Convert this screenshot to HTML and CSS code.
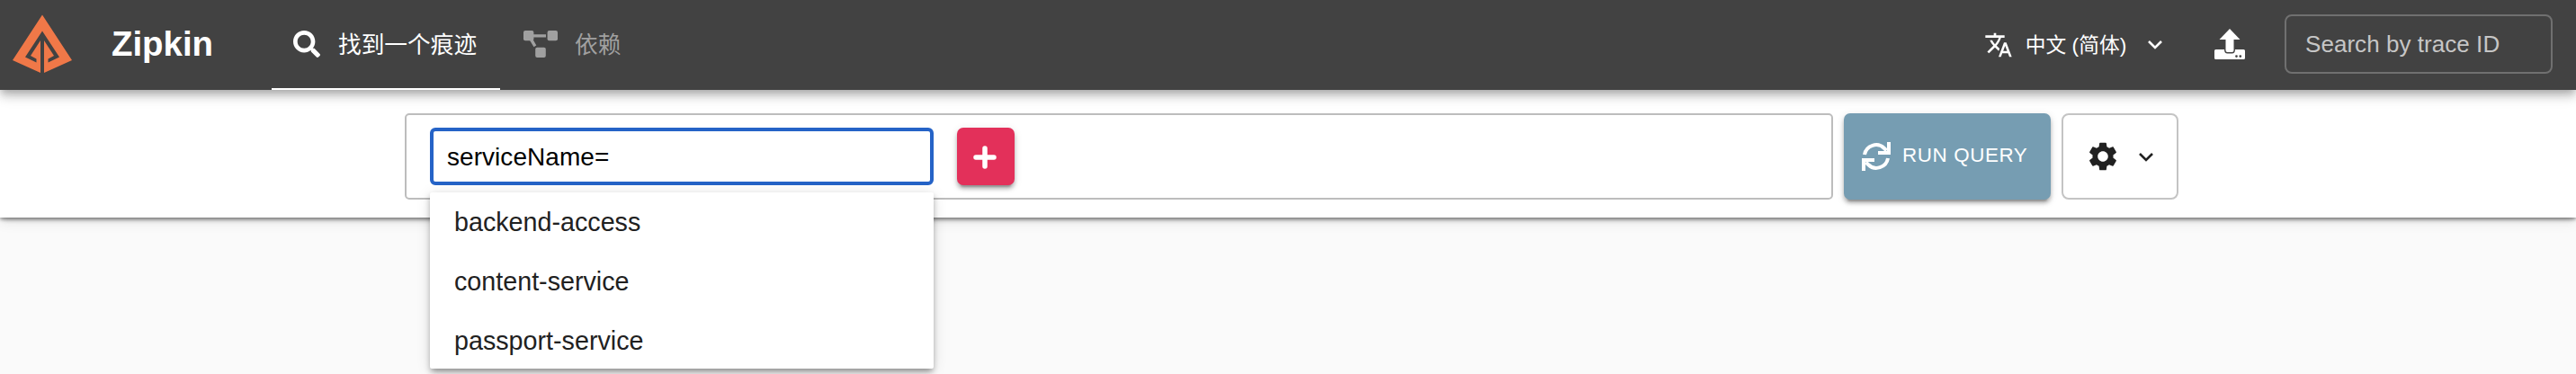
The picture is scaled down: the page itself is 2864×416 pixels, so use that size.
FILE: index.html
```html
<!DOCTYPE html>
<html lang="zh-CN">
<head>
<meta charset="utf-8">
<title>Zipkin</title>
<link rel="stylesheet" href="styles.css">
</head>
<body>
<header class="header">
  <svg class="logo" viewBox="0 0 66 66"><path d="M33 .5 66 51 35 65V29L46 46 39.500 49.500V53.500L52 47.500 33 18.500 14 47.500 26.500 53.500V49.500L20 46 31 29V65L0 51Z"/></svg>
  <h1 class="title">Zipkin</h1>
  <nav class="tabs">
    <a class="tab active"><svg class="search" viewBox="0 0 512 512"><path d="M505 442.700 405.300 343c-4.500-4.500-10.600-7-17-7H372c27.600-35.300 44-79.700 44-128C416 93.100 322.900 0 208 0S0 93.100 0 208s93.100 208 208 208c48.300 0 92.700-16.400 128-44v16.300c0 6.400 2.500 12.500 7 17l99.700 99.700c9.400 9.400 24.600 9.400 33.900 0l28.300-28.300c9.400-9.400 9.400-24.600.1-34zM208 336c-70.700 0-128-57.200-128-128 0-70.700 57.200-128 128-128 70.700 0 128 57.200 128 128 0 70.700-57.200 128-128 128z"/></svg><span>找到一个痕迹</span></a>
    <a class="tab"><svg class="deps" viewBox="0 0 38 30"><rect width="11.400" height="11.200" rx="2"/><rect x="26.600" width="11.400" height="11.200" rx="2"/><rect x="13.200" y="18.800" width="11.600" height="11.200" rx="2"/><path d="M11 4.200h14v3.200H11zM6.500 10l3-2 4.800 8.500-2.800 1.800Z"/></svg><span>依赖</span></a>
  </nav>
  <div class="tools">
    <button class="language"><svg class="translate" viewBox="0 0 24 24"><path d="M12.870 15.070l-2.540-2.510.03-.03c1.740-1.940 2.980-4.170 3.710-6.530H17V4h-7V2H8v2H1v1.990h11.170C11.500 7.920 10.440 9.750 9 11.350 8.070 10.320 7.300 9.190 6.690 8h-2c.73 1.630 1.730 3.170 2.980 4.560l-5.090 5.020L4 19l5-5 3.110 3.110.76-2.040zM18.500 10h-2L12 22h2l1.120-3h4.750L21 22h2l-4.500-12zm-2.620 7l1.620-4.330L19.120 17h-3.240z"/></svg><span>中文 (简体)</span><svg class="chevron" viewBox="0 0 16 10"><path d="m1 1 7 7 7-7"/></svg></button>
    <svg class="upload" viewBox="0 0 34 34"><path d="M17 0 28.500 12H21.500V24q0 2-2 2h-5q-2 0-2-2V12H5.500Z"/><path fill-rule="evenodd" d="M1.500 23H11q0 4.500 3.500 4.500h5Q23 27.500 23 23h9.500Q34 23 34 24.500v8Q34 34 32.500 34h-31Q0 34 0 32.500v-8Q0 23 1.500 23ZM24.500 29.200a1.400 1.400 0 1 0 0 2.800 1.400 1.400 0 0 0 0-2.800Zm4.300 0a1.400 1.400 0 1 0 0 2.800 1.400 1.400 0 0 0 0-2.800Z"/></svg>
    <input class="trace-input" placeholder="Search by trace ID">
  </div>
</header>
<main class="search-bar">
  <div class="criteria">
    <div class="criterion">
      <input class="criterion-input" value="serviceName=">
      <ul class="suggestions"><li>backend-access</li><li>content-service</li><li>passport-service</li></ul>
    </div>
    <button class="add"><svg viewBox="0 0 26 26"><path d="M13 3v20M3 13h20"/></svg></button>
  </div>
  <button class="run"><svg viewBox="0 0 32 32"><path d="M3 14A13 13 0 0 1 25 7L27.500 9.500M29 18A13 13 0 0 1 7 25L4.500 22.500"/><path class="fill" d="M28 0h4v14H18v-4h10ZM4 32H0V18h14v4H4Z"/></svg><span>RUN QUERY</span></button>
  <button class="settings"><svg class="gear" viewBox="2 2 20 20"><path d="M19.140 12.940c.04-.3.060-.61.060-.94 0-.32-.02-.64-.07-.94l2.030-1.580c.18-.14.230-.41.120-.61l-1.920-3.320c-.12-.22-.37-.29-.59-.22l-2.390.96c-.5-.38-1.030-.7-1.620-.94l-.36-2.540c-.04-.24-.24-.41-.48-.41h-3.840c-.24 0-.43.170-.47.410l-.36 2.540c-.59.240-1.130.570-1.620.940l-2.390-.96c-.22-.08-.47 0-.59.220L2.740 8.870c-.12.210-.08.470.120.610l2.030 1.580c-.05.300-.09.630-.09.940s.02.640.07.940l-2.030 1.580c-.18.140-.23.410-.12.610l1.920 3.320c.12.220.37.290.59.220l2.390-.96c.5.380 1.030.7 1.620.940l.36 2.540c.05.240.24.410.48.410h3.840c.24 0 .44-.17.470-.41l.36-2.540c.59-.24 1.130-.56 1.620-.94l2.390.96c.22.080.47 0 .59-.22l1.920-3.320c.12-.22.070-.47-.12-.61l-2.010-1.580zM12 15.600c-1.980 0-3.600-1.620-3.600-3.600s1.620-3.600 3.600-3.600 3.600 1.620 3.600 3.600-1.620 3.600-3.600 3.600z"/></svg><svg class="chevron" viewBox="0 0 16 10"><path d="m1 1 7 7 7-7"/></svg></button>
</main>
</body>
</html>
```

FILE: styles.css
```css
* { box-sizing: border-box; }
body { margin: 0; height: 416px; overflow: hidden; background: #fafafa; font-family: "Liberation Sans", "Noto Sans CJK SC", sans-serif; }
button { border: 0; padding: 0; background: none; font-family: inherit; display: flex; align-items: center; }
svg { display: block; flex: none; fill: currentColor; }
input { outline: 0; font-family: inherit; }
.header { position: relative; z-index: 1; height: 100px; display: flex; align-items: center; background: #424242; color: #fff; box-shadow: 0 4px 8px -2px rgba(0,0,0,.2), 0 8px 10px rgba(0,0,0,.14), 0 2px 20px rgba(0,0,0,.12); }
.logo { width: 66px; height: 66px; margin: -2px 0 0 14px; color: #f07848; }
.title { width: 178px; margin: -2px 0 0 44px; font-size: 38.400px; line-height: 46px; }
.tabs { display: flex; height: 100px; }
.tab { display: flex; align-items: center; height: 100px; padding: 0 24px; font-size: 25.700px; line-height: 38px; font-weight: 400; color: #a0a0a0; white-space: nowrap; }
.active { width: 254px; border-bottom: 2px solid #fff; color: #fff; }
.tab:not(.active) { padding: 0 26px 2px; }
.search { width: 30px; height: 30px; margin-right: 20px; }
.deps { width: 38px; height: 30px; margin-right: 19px; }
.tab span { padding-top: 2px; }
.tools { display: flex; align-items: center; margin: -2px 26px 0 auto; }
.language { color: #fff; font-size: 22.750px; font-weight: 400; margin-right: 58px; }
.translate { width: 32px; height: 32px; margin: 2px 12px 0 0; }
.language span { width: 116px; margin-right: 22px; padding-bottom: 2px; white-space: nowrap; }
.chevron { width: 16px; height: 10px; margin-top: 2px; fill: none; stroke: currentColor; stroke-width: 2.600; }
.upload { width: 34px; height: 34px; margin-right: 44px; }
.trace-input { width: 298px; height: 66px; padding: 0 21px; border: 2px solid #707070; border-radius: 8px; background: transparent; color: #fff; font-size: 26px; letter-spacing: .05px; }
.trace-input::placeholder { color: #c6c6c6; opacity: 1; }
.search-bar { display: flex; height: 142px; padding: 26px 442px 20px 450px; gap: 12px; background: #fff; box-shadow: 0 6px 6px -4px rgba(0,0,0,.2), 0 2px 4px rgba(0,0,0,.4), 0 2px 16px rgba(0,0,0,.12); }
.criteria { width: 1588px; height: 96px; padding: 14px 26px; display: flex; gap: 26px; border: 2px solid #bdbdbd; border-radius: 5px; }
.criterion { position: relative; width: 560px; height: 64px; }
.criterion-input { display: block; width: 560px; height: 64px; padding: 2px 15px 0; border: 4px solid #2563c7; border-radius: 6px; font-size: 28px; letter-spacing: .05px; color: #000; background: #fff; }
.suggestions { position: absolute; top: 72px; left: 0; width: 560px; height: 196px; margin: 0; padding: 0; list-style: none; background: #fff; color: #212121; border-radius: 2px; box-shadow: 0 6px 6px -4px rgba(0,0,0,.2), 0 4px 6px rgba(0,0,0,.24), 0 2px 16px rgba(0,0,0,.12); }
.suggestions li { height: 66px; padding-left: 27px; font-size: 28.700px; line-height: 66px; }
.add { justify-content: center; width: 64px; height: 64px; border-radius: 7px; background: #e3305a; color: #fff; box-shadow: 0 6px 2px -4px rgba(0,0,0,.2), 0 4px 4px rgba(0,0,0,.24), 0 2px 10px rgba(0,0,0,.12); }
.add svg { width: 26px; height: 26px; margin: 1px 0 0 -2px; stroke: currentColor; stroke-width: 5.500; stroke-linecap: round; }
.run { width: 230px; height: 96px; padding: 0 20px; gap: 13px; border-radius: 7px; background: #769db2; color: #fff; font-size: 22.400px; letter-spacing: .6px; white-space: nowrap; box-shadow: 0 6px 2px -4px rgba(0,0,0,.2), 0 4px 4px rgba(0,0,0,.24), 0 2px 10px rgba(0,0,0,.12); }
.run svg { width: 32px; height: 32px; fill: none; stroke: currentColor; stroke-width: 4; }
.run .fill { fill: currentColor; stroke: none; }
.run span { padding-bottom: 3px; }
.settings { width: 130px; height: 96px; padding-left: 28px; border: 2px solid #c4c4c4; border-radius: 8px; color: #212121; }
.gear { width: 32px; height: 32px; margin-right: 24px; }
.settings .chevron { margin-top: 1px; }
```
